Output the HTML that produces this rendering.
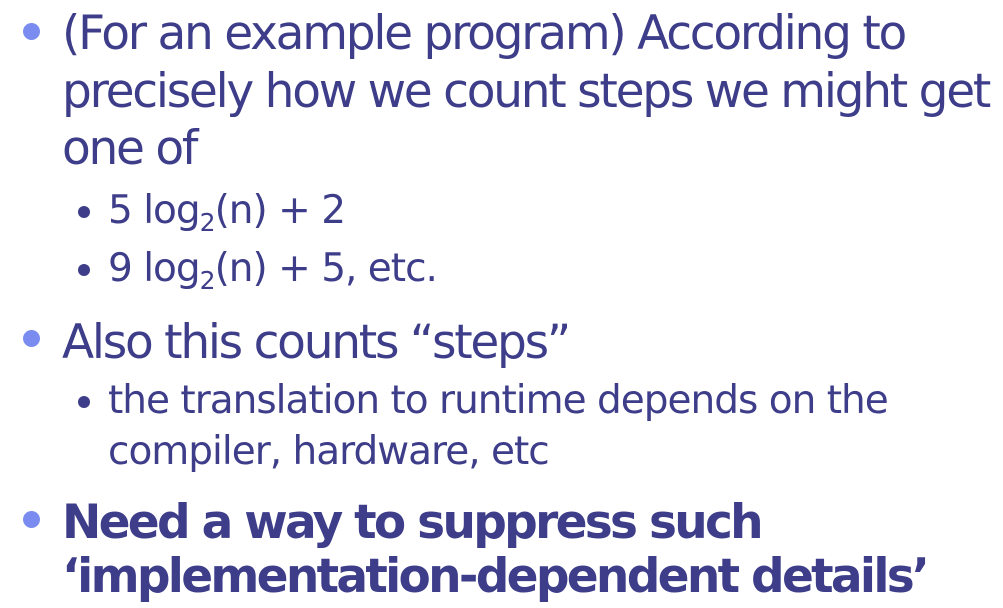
<!DOCTYPE html>
<html><head><meta charset="utf-8"><style>
body{margin:0;width:1003px;height:608px;background:#fff;overflow:hidden;position:relative;font-family:"DejaVu Sans","Liberation Sans",sans-serif;color:#3d3d8a}
.l{position:absolute;white-space:nowrap;line-height:1}
.m{font-size:47px;left:62px;letter-spacing:-2.25px}
.s{font-size:39px;left:108px;letter-spacing:-1px}
.b{font-weight:bold;letter-spacing:-2.7px}
.d1{position:absolute;width:17px;height:17px;border-radius:50%;background:#7b8cf0}
.d2{position:absolute;width:12px;height:12px;border-radius:50%;background:#3d3d8a}
sub{font-size:25px;vertical-align:-8px;line-height:0}
</style></head><body>
<div class="d1" style="left:23px;top:23px"></div>
<div class="l m" style="top:10px">(For an example program) According to</div>
<div class="l m" style="top:68px">precisely how we count steps we might get</div>
<div class="l m" style="top:125px">one of</div>
<div class="d2" style="left:78px;top:206px"></div>
<div class="l s" style="top:191px">5 log<sub>2</sub>(n) + 2</div>
<div class="d2" style="left:78px;top:264px"></div>
<div class="l s" style="top:249px">9 log<sub>2</sub>(n) + 5, etc.</div>
<div class="d1" style="left:23px;top:330px"></div>
<div class="l m" style="top:319px">Also this counts “steps”</div>
<div class="d2" style="left:78px;top:396px"></div>
<div class="l s" style="top:381px">the translation to runtime depends on the</div>
<div class="l s" style="top:432px">compiler, hardware, etc</div>
<div class="d1" style="left:23px;top:511px"></div>
<div class="l m b" style="top:499px">Need a way to suppress such</div>
<div class="l m b" style="top:553px">‘implementation-dependent details’</div>
</body></html>
